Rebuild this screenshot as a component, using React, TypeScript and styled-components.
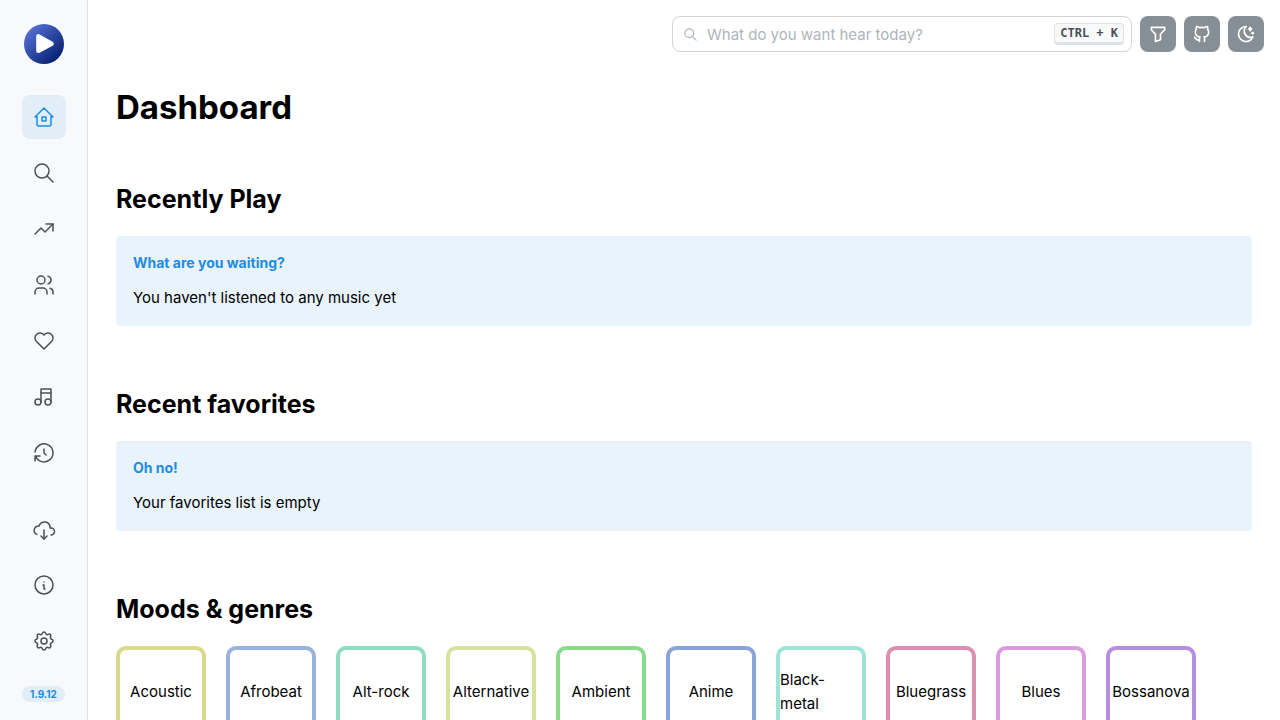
import React from "react";
import styled, { createGlobalStyle } from "styled-components";
import {
  TbBrandGithub,
  TbCloudDownload,
  TbFilter,
  TbHeart,
  TbHistory,
  TbHome2,
  TbInfoCircle,
  TbMoonStars,
  TbMusic,
  TbSearch,
  TbSettings,
  TbTrendingUp,
  TbUsers,
} from "react-icons/tb";

const GlobalStyle = createGlobalStyle`
  *, *::before, *::after { box-sizing: border-box; }
  body {
    margin: 0;
    background: #fff;
    color: #000;
    font-family: Inter, "Liberation Sans", sans-serif;
    font-size: 15px;
    line-height: 24px;
  }
`;

const Shell = styled.div`
  display: flex;
  align-items: flex-start;
  min-height: 100vh;
`;

const Sidebar = styled.aside`
  position: sticky;
  top: 0;
  flex: 0 0 88px;
  height: 100vh;
  padding: 24px 0 18px;
  display: flex;
  flex-direction: column;
  align-items: center;
  background: #f8f9fa;
  border-right: 1px solid #dee2e6;
`;

const Logo = styled.a`
  display: block;
  width: 40px;
  height: 40px;
  margin-bottom: 31px;

  svg { display: block; }
`;

const NavGroup = styled.nav`
  display: flex;
  flex-direction: column;
  gap: 12px;
`;

const BottomGroup = styled(NavGroup)`
  margin-top: auto;
`;

const NavLink = styled.a<{ $active?: boolean }>`
  display: flex;
  align-items: center;
  justify-content: center;
  width: 44px;
  height: 44px;
  border-radius: 8px;
  color: ${(p) => (p.$active ? "#228be6" : "#495057")};
  background: ${(p) => (p.$active ? "rgba(34, 139, 230, 0.1)" : "transparent")};
`;

const Version = styled.span`
  margin-top: 23px;
  padding: 0 8px;
  border-radius: 16px;
  background: rgba(34, 139, 230, 0.1);
  color: #228be6;
  font-size: 10px;
  font-weight: 700;
  line-height: 16px;
`;

const Page = styled.div`
  flex: 1;
  min-width: 0;
`;

const Toolbar = styled.header`
  display: flex;
  justify-content: flex-end;
  gap: 8px;
  padding: 16px;
`;

const SearchBox = styled.label`
  display: flex;
  align-items: center;
  flex: 0 1 460px;
  min-width: 0;
  height: 36px;
  padding: 0 7px 0 10px;
  border: 1px solid #ced4da;
  border-radius: 8px;
  background: #fff;
  color: #adb5bd;

  svg { flex: none; }
`;

const SearchInput = styled.input`
  flex: 1;
  min-width: 0;
  height: 34px;
  padding: 0 9px;
  border: 0;
  outline: 0;
  background: transparent;
  color: #000;
  font: inherit;

  &::placeholder {
    color: #adb5bd;
    opacity: 1;
  }
`;

const Shortcut = styled.kbd`
  flex: none;
  padding: 0 5px;
  border: 1px solid #dee2e6;
  border-bottom-width: 3px;
  border-radius: 4px;
  background: #f8f9fa;
  color: #495057;
  font-family: "DejaVu Sans Mono", monospace;
  font-size: 12px;
  font-weight: 700;
  line-height: 18px;
`;

const ToolButton = styled.button`
  display: flex;
  align-items: center;
  justify-content: center;
  flex: none;
  width: 36px;
  height: 36px;
  padding: 0;
  border: 0;
  border-radius: 8px;
  background: #868e96;
  color: #fff;
`;

const Content = styled.main`
  padding: 16px 28px 28px;
`;

const Title = styled.h1`
  margin: 0 0 51px;
  font-size: 33px;
  font-weight: 700;
  line-height: 46px;
`;

const Section = styled.section`
  & + & { margin-top: 60px; }
`;

const SectionTitle = styled.h2`
  margin: 0 0 18px;
  font-size: 25px;
  font-weight: 700;
  line-height: 37px;
`;

const Notice = styled.div`
  padding: 16px 17px;
  border-radius: 4px;
  background: rgba(34, 139, 230, 0.1);
`;

const NoticeTitle = styled.h3`
  margin: 0 0 12px;
  color: #228be6;
  font-size: 14px;
  font-weight: 700;
  line-height: 22px;
`;

const NoticeText = styled.p`
  margin: 0;
`;

const GenreGrid = styled.div`
  display: flex;
  flex-wrap: wrap;
  gap: 20px;
`;

const GenreCard = styled.a<{ $color: string }>`
  display: flex;
  align-items: center;
  justify-content: center;
  width: 90px;
  height: 90px;
  padding-top: 2px;
  border: 4px solid ${(p) => p.$color};
  border-radius: 10px;
  color: inherit;
  text-decoration: none;
`;

const mainLinks = [
  { label: "Dashboard", Icon: TbHome2, active: true },
  { label: "Search", Icon: TbSearch },
  { label: "Trending", Icon: TbTrendingUp },
  { label: "Artists", Icon: TbUsers },
  { label: "Favorites", Icon: TbHeart },
  { label: "Playlists", Icon: TbMusic },
  { label: "History", Icon: TbHistory },
];

const bottomLinks = [
  { label: "Downloads", Icon: TbCloudDownload },
  { label: "About", Icon: TbInfoCircle },
  { label: "Settings", Icon: TbSettings },
];

const tools = [
  { label: "Filter", Icon: TbFilter },
  { label: "GitHub", Icon: TbBrandGithub },
  { label: "Toggle dark mode", Icon: TbMoonStars },
];

const notices = [
  {
    heading: "Recently Play",
    title: "What are you waiting?",
    text: "You haven't listened to any music yet",
  },
  {
    heading: "Recent favorites",
    title: "Oh no!",
    text: "Your favorites list is empty",
  },
];

const genres = [
  { name: "Acoustic", color: "#dad98a" },
  { name: "Afrobeat", color: "#9ab3de" },
  { name: "Alt-rock", color: "#8eddc2" },
  { name: "Alternative", color: "#d8e29a" },
  { name: "Ambient", color: "#8adb8a" },
  { name: "Anime", color: "#88a4d9" },
  { name: "Black-metal", color: "#9ce5d6" },
  { name: "Bluegrass", color: "#dd8fb2" },
  { name: "Blues", color: "#dc9be0" },
  { name: "Bossanova", color: "#b68fdf" },
];

export default function App() {
  return (
    <>
      <GlobalStyle />
      <Shell>
        <Sidebar>
          <Logo href="#" aria-label="Home">
            <svg width="40" height="40" viewBox="0 0 40 40">
              <defs>
                <linearGradient id="logo" x1="0.1" y1="0.1" x2="0.85" y2="0.9">
                  <stop offset="0" stopColor="#5872d8" />
                  <stop offset="1" stopColor="#04206f" />
                </linearGradient>
              </defs>
              <circle cx="20" cy="20" r="20" fill="url(#logo)" />
              <path
                d="M14.5 12.5v14.3L27.5 19.8z"
                fill="#fff"
                stroke="#fff"
                strokeWidth="4.6"
                strokeLinejoin="round"
              />
            </svg>
          </Logo>
          <NavGroup aria-label="Main">
            {mainLinks.map(({ label, Icon, active }) => (
              <NavLink key={label} href="#" aria-label={label} $active={active}>
                <Icon size={24} strokeWidth={1.5} />
              </NavLink>
            ))}
          </NavGroup>
          <BottomGroup aria-label="Application">
            {bottomLinks.map(({ label, Icon }) => (
              <NavLink key={label} href="#" aria-label={label}>
                <Icon size={24} strokeWidth={1.5} />
              </NavLink>
            ))}
          </BottomGroup>
          <Version>1.9.12</Version>
        </Sidebar>
        <Page>
          <Toolbar>
            <SearchBox>
              <TbSearch size={15} />
              <SearchInput
                type="text"
                aria-label="Search"
                placeholder="What do you want hear today?"
              />
              <Shortcut>CTRL + K</Shortcut>
            </SearchBox>
            {tools.map(({ label, Icon }) => (
              <ToolButton key={label} type="button" aria-label={label}>
                <Icon size={20} />
              </ToolButton>
            ))}
          </Toolbar>
          <Content>
            <Title>Dashboard</Title>
            {notices.map((n) => (
              <Section key={n.heading}>
                <SectionTitle>{n.heading}</SectionTitle>
                <Notice>
                  <NoticeTitle>{n.title}</NoticeTitle>
                  <NoticeText>{n.text}</NoticeText>
                </Notice>
              </Section>
            ))}
            <Section>
              <SectionTitle>Moods &amp; genres</SectionTitle>
              <GenreGrid>
                {genres.map((g) => (
                  <GenreCard key={g.name} href="#" $color={g.color}>
                    {g.name}
                  </GenreCard>
                ))}
              </GenreGrid>
            </Section>
          </Content>
        </Page>
      </Shell>
    </>
  );
}
